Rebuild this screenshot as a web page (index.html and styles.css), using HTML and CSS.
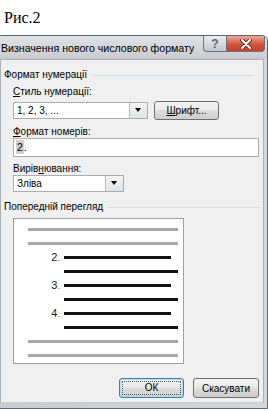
FILE: index.html
```html
<!DOCTYPE html>
<html lang="uk">
<head>
  <meta charset="UTF-8" />
  <meta name="viewport" content="width=device-width, initial-scale=1.0" />
  <title>Рис.2</title>
  <link rel="stylesheet" href="styles.css">
</head>
<body>
  <p class="fig-caption">Рис.2</p>

  <div class="window">
    <div class="titlebar">
      <span class="title">Визначення нового числового формату</span>
      <div class="cap-btns">
        <span class="cap-btn help">?</span>
        <span class="cap-btn close">
          <svg width="14" height="10" viewBox="0 0 14 10">
            <path d="M3 1 L11 9 M11 1 L3 9" stroke="#6b2a22" stroke-width="4" stroke-linecap="round"/>
            <path d="M3 1 L11 9 M11 1 L3 9" stroke="#fff" stroke-width="2" stroke-linecap="round"/>
          </svg>
        </span>
      </div>
    </div>

    <div class="dialog">
      <!-- Format group -->
      <div class="group-head"><span>Формат нумерації</span></div>

      <div class="label first"><u>С</u>тиль нумерації:</div>
      <div class="field-row">
        <div class="combo style-combo">
          <span class="value">1, 2, 3, ...</span>
          <span class="drop"></span>
        </div>
        <button class="btn font-btn"><u>Ш</u>рифт...</button>
      </div>

      <div class="label"><u>Ф</u>ормат номерів:</div>
      <div class="textbox"><span class="sel">2</span>.</div>

      <div class="label">Вирів<u>н</u>ювання:</div>
      <div class="combo align-combo">
        <span class="value">Зліва</span>
        <span class="drop"></span>
      </div>

      <!-- Preview group -->
      <div class="group-head preview-head"><span>Попередній перегляд</span></div>
      <div class="preview">
        <div class="pline"><span class="num"></span><span class="bar gray"></span></div>
        <div class="pline"><span class="num"></span><span class="bar gray"></span></div>
        <div class="pline"><span class="num">2<span class="dot">.</span></span><span class="bar short"></span></div>
        <div class="pline"><span class="num"></span><span class="bar"></span></div>
        <div class="pline"><span class="num">3<span class="dot">.</span></span><span class="bar short"></span></div>
        <div class="pline"><span class="num"></span><span class="bar"></span></div>
        <div class="pline"><span class="num">4<span class="dot">.</span></span><span class="bar short"></span></div>
        <div class="pline"><span class="num"></span><span class="bar"></span></div>
        <div class="pline"><span class="num"></span><span class="bar gray"></span></div>
        <div class="pline"><span class="num"></span><span class="bar gray"></span></div>
      </div>

      <div class="actions">
        <button class="btn ok-btn"><span class="focus">ОК</span></button>
        <button class="btn">Скасувати</button>
      </div>
    </div>
  </div>
</body>
</html>
```

FILE: styles.css
```css
/* Page */
body {
  margin: 0;
  background: #fff;
  font-family: 'Liberation Sans', Arial, sans-serif;
  font-size: 10px;
  color: #000;
  height: 412px;
  overflow: hidden;
}
.fig-caption {
  margin: 0;
  height: 35px;
  box-sizing: border-box;
  padding: 8px 0 0 4px;
  font-family: 'Liberation Serif', 'Times New Roman', serif;
  font-size: 16px;
  line-height: 20px;
}

/* Window frame */
.window {
  margin-left: -4px;
  width: 272px;
  box-sizing: border-box;
  border: 1px solid #5f656c;
  border-radius: 6px 6px 0 0;
  background: linear-gradient(90deg, #c9cdd2, #d3d6da);
  padding-bottom: 5px;
}
.titlebar {
  height: 23px;
  display: flex;
  justify-content: space-between;
  align-items: flex-start;
  padding: 0 2px 0 4px;
  background: linear-gradient(#dfe2e6, #c8ccd1);
  border-radius: 5px 5px 0 0;
}
.title {
  font-size: 10.6px;
  line-height: 23px;
  padding-top: 1px;
  color: #000;
  white-space: nowrap;
  overflow: hidden;
}
.cap-btns {
  display: flex;
  flex-shrink: 0;
}
.cap-btn {
  height: 16px;
  box-sizing: border-box;
  border: 1px solid #6c737b;
  border-top: none;
  display: flex;
  align-items: center;
  justify-content: center;
}
.help {
  width: 24px;
  border-radius: 0 0 0 4px;
  background: linear-gradient(#eceef0, #c3c8ce);
  color: #5b6470;
  font-weight: bold;
  font-size: 12px;
}
.close {
  width: 38px;
  border-left: none;
  border-radius: 0 0 4px 0;
  background: linear-gradient(#e9a99c, #d2553f 55%, #c4402b);
}

/* Dialog body */
.dialog {
  margin: 0 3px;
  background: #f0f0f0;
  border: 1px solid #a9b0b8;
  border-bottom-color: #c9cdd2;
  height: 344px;
  box-sizing: border-box;
  padding: 0 2px 0 0;
}
.group-head {
  display: flex;
  align-items: center;
  gap: 5px;
  height: 12px;
  margin-top: 9px;
  padding-left: 3px;
  line-height: 12px;
}
.group-head::after {
  content: '';
  flex: 1;
  height: 1px;
  margin-right: 6px;
  background: #d5dfe5;
}
.preview-head {
  margin-top: 9px;
}
.preview-head::after {
  margin-right: 0;
}
.label {
  margin: 6px 0 0 12px;
  height: 12px;
  line-height: 12px;
}
.label.first {
  margin-top: 5px;
}
.field-row {
  display: flex;
  align-items: center;
  gap: 6px;
  margin: 3px 0 0 12px;
  height: 19px;
}

/* Combos & inputs */
.combo {
  display: flex;
  height: 17px;
  box-sizing: border-box;
  border: 1px solid #abadb3;
  background: #fff;
  margin-left: 12px;
}
.field-row .combo {
  margin-left: 0;
}
.style-combo {
  width: 135px;
}
.align-combo {
  width: 111px;
}
.combo .value {
  flex: 1;
  padding-left: 3px;
  line-height: 15px;
}
.combo .drop {
  width: 17px;
  border-left: 1px solid #b5b8bd;
  background: linear-gradient(#f4f4f4, #e2e3e6);
  position: relative;
}
.combo .drop::after {
  content: '';
  position: absolute;
  left: 5px;
  top: 5px;
  border-left: 3.5px solid transparent;
  border-right: 3.5px solid transparent;
  border-top: 4px solid #000;
}
.textbox {
  margin: 0 2px 0 12px;
  height: 19px;
  box-sizing: border-box;
  border: 1px solid #abadb3;
  background: #fff;
  padding-left: 2px;
  line-height: 17px;
  font-size: 10.5px;
}
.textbox .sel {
  background: #cfcfcf;
  padding: 1px 1px;
}

/* Buttons */
.btn {
  font-family: inherit;
  font-size: 10px;
  color: #000;
  height: 20px;
  box-sizing: border-box;
  border: 1px solid #707070;
  border-radius: 3px;
  background: linear-gradient(#f2f2f2, #ebebeb 45%, #dddddd 50%, #cfcfcf);
  padding: 0;
}
.font-btn {
  width: 65px;
  height: 19px;
}
.actions {
  display: flex;
  justify-content: flex-end;
  gap: 9px;
  margin: 14px 2px 0 0;
}
.actions .btn {
  width: 66px;
}
.ok-btn {
  width: 65px !important;
  border-color: #3c7fb1;
  box-shadow: inset 0 0 0 1px #b4dcf5;
  display: flex;
  padding: 2px;
}
.ok-btn .focus {
  flex: 1;
  border: 1px dotted #555;
  line-height: 12px;
}

/* Preview box */
.preview {
  margin: 5px 0 0 12px;
  width: 171px;
  height: 146px;
  box-sizing: border-box;
  border: 1px solid #a0a0a0;
  background: #fff;
  padding: 3px 0 0 14px;
}
.pline {
  display: flex;
  align-items: center;
  height: 14px;
}
.pline .num {
  width: 36px;
  box-sizing: border-box;
  padding-right: 4px;
  text-align: right;
  font-size: 11px;
  line-height: 14px;
  color: #222;
}
.pline .num .dot {
  color: #666;
  font-size: 9px;
}
.bar {
  width: 114px;
  height: 3px;
  background: #111;
}
.bar.short {
  width: 107px;
}
.bar.gray {
  width: 150px;
  margin-left: -36px;
  background: #a8a8a8;
}
```
